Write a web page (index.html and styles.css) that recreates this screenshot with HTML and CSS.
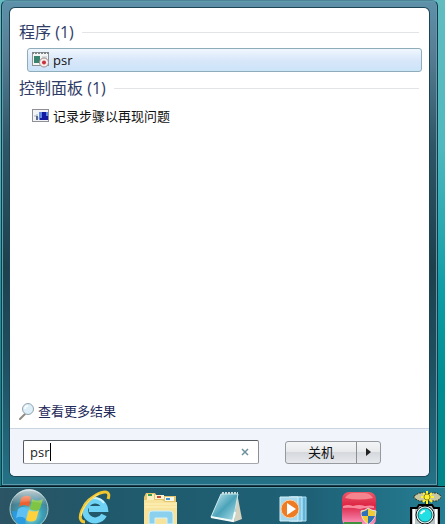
FILE: index.html
```html
<!DOCTYPE html>
<html lang="zh-CN">
<head>
    <meta charset="UTF-8">
    <meta name="viewport" content="width=device-width, initial-scale=1.0">
    <title>psr</title>
    <link rel="stylesheet" href="styles.css">
</head>
<body>
    <div class="desktop">
        <div class="startMenu">
            <div class="panel">
                <div class="results">
                    <h2>程序 (1)</h2>
                    <a href="#" class="item selected">
                        <svg width="18" height="16" viewBox="0 0 18 16">
                            <rect x="0.5" y="0.5" width="16" height="13" fill="#f4f6f6" stroke="#8b9293"/>
                            <path d="M0 1h17" stroke="#7d8588" stroke-width="2" stroke-dasharray="2 1"/>
                            <rect x="2" y="4" width="6" height="7" fill="#39836f"/>
                            <path d="M10 5h5M10 7h5" stroke="#b6bfc0"/>
                            <circle cx="12" cy="10.5" r="4.5" fill="#f7eeee" stroke="#9d8e90"/>
                            <circle cx="12" cy="10.5" r="2" fill="#c9303b"/>
                        </svg>
                        <span>psr</span>
                    </a>
                    <h2>控制面板 (1)</h2>
                    <a href="#" class="item">
                        <svg width="18" height="16" viewBox="0 0 18 16">
                            <rect x="0.5" y="1.5" width="16" height="12" fill="#f3f3f5" stroke="#8f8f98"/>
                            <rect x="7" y="4" width="9" height="8" fill="#5d86e0"/>
                            <path d="M10 4h4v4h2v4H8v-2h2z" fill="#1218a0"/>
                            <path d="M2 8h3M4 10h3M5 6v6" stroke="#a5b0c4"/>
                            <path d="M4 8h2v4H4z" fill="#5c6887"/>
                        </svg>
                        <span>记录步骤以再现问题</span>
                    </a>
                    <a href="#" class="more">
                        <svg width="18" height="18" viewBox="0 0 18 18">
                            <path d="M6 12L1 17" stroke="#8f8a82" stroke-width="2" stroke-linecap="round"/>
                            <circle cx="9" cy="7" r="5.5" fill="#dceff8" stroke="#93a5b0"/>
                            <path d="M6 7a3 3 0 0 1 3-3" fill="none" stroke="#fff" stroke-width="1.5"/>
                        </svg>
                        <span>查看更多结果</span>
                    </a>
                </div>
                <div class="footer">
                    <div class="search">
                        <input type="text" value="psr" aria-label="搜索程序和文件" id="query" autofocus>
                        <span class="caret"></span>
                        <button class="clear" aria-label="清除">
                            <svg width="8" height="8" viewBox="0 0 8 8"><path d="M1 1l6 6M7 1L1 7" stroke="#6d929b" stroke-width="1.5"/></svg>
                        </button>
                    </div>
                    <div class="power">
                        <button class="shutdown">关机</button>
                        <button class="arrow" aria-label="更多选项">
                            <svg width="5" height="8" viewBox="0 0 5 8"><path d="M0 0l5 4-5 4z" fill="#222"/></svg>
                        </button>
                    </div>
                </div>
            </div>
        </div>
    </div>
    <div class="taskbar">
        <button aria-label="开始">
            <svg width="40" height="36" viewBox="1 0 40 36">
                <defs>
                    <radialGradient id="orb" cx="55%" cy="65%" r="60%">
                        <stop offset="0" stop-color="#a5f0e0"/>
                        <stop offset="0.5" stop-color="#3a9fb8"/>
                        <stop offset="1" stop-color="#4a7482"/>
                    </radialGradient>
                    <linearGradient id="shine" x1="0" y1="0" x2="0" y2="1">
                        <stop offset="0" stop-color="#fff" stop-opacity="0.7"/>
                        <stop offset="1" stop-color="#fff" stop-opacity="0"/>
                    </linearGradient>
                </defs>
                <circle cx="21" cy="21" r="19" fill="url(#orb)" stroke="#a8cfd0"/>
                <path d="M4 23q7 0 14 4l-1 12Q5 35 4 23z" fill="#2a9be0"/>
                <path d="M13 10q5-4 10-1l-2 10q-5-4-10 0z" fill="#ee6130"/>
                <path d="M24 11q5 3 11 0l-3 10q-5 3-10 0z" fill="#7fc443"/>
                <path d="M10 21q5-4 10 0l-2 10q-5-4-10-1z" fill="#5fc0f4"/>
                <path d="M21 22q5 3 10 0l-3 10q-5 3-10 0z" fill="#ffd23d"/>
                <path d="M4 17a17 16 0 0 1 34 0q-17-7-34 0z" fill="url(#shine)"/>
            </svg>
        </button>
        <button aria-label="Internet Explorer">
            <svg width="34" height="36" viewBox="0 0 34 36">
                <path d="M26 27a10 10 0 1 1 1-6H11" fill="none" stroke="#6fd3f6" stroke-width="6"/>
                <path d="M10 12a11 10 0 0 1 16 3" fill="none" stroke="#c8f3ff" stroke-width="2"/>
                <path d="M7 34C-3 34 4 15 18 7 27 2 33 3 30 11" fill="none" stroke="#f2c62e" stroke-width="3"/>
                <path d="M3 28C4 20 12 10 21 6" fill="none" stroke="#ffe994"/>
            </svg>
        </button>
        <button aria-label="资源管理器">
            <svg width="36" height="36" viewBox="0 0 36 36">
                <path d="M1 9l2-4h9l2 3h19v28H1z" fill="#e5c66e"/>
                <path d="M4 6h7v6H4z" fill="#f8efc2"/>
                <path d="M5 6h4v2H5z" fill="#3b9d48"/>
                <path d="M12 7h9v4h-9z" fill="#fff4d4"/>
                <path d="M14 8h4v2h-4z" fill="#c44a35"/>
                <path d="M22 9h9v4h-9z" fill="#f5f8ec"/>
                <path d="M23 10h4v2h-4z" fill="#4a95c9"/>
                <path d="M1 12h18l3 2h12v22H1z" fill="#f7e39c"/>
                <path d="M2 16h32M2 19h32" stroke="#fff3bd"/>
                <path d="M6 36V26q0-3 3-3h18q3 0 3 3v10h-6v-6H12v6z" fill="#8bd1ee" stroke="#d1f2fb"/>
            </svg>
        </button>
        <button aria-label="记事本">
            <svg width="34" height="36" viewBox="0 0 34 36">
                <defs>
                    <linearGradient id="note" x1="0" y1="0" x2="1" y2="1">
                        <stop offset="0" stop-color="#d0eef2"/>
                        <stop offset="0.5" stop-color="#4ba3b9"/>
                        <stop offset="1" stop-color="#b9e7ee"/>
                    </linearGradient>
                </defs>
                <path d="M27 5l5 26-8 3z" fill="#d3d1c0"/>
                <path d="M11 6h17l-5 27L1 29z" fill="url(#note)" stroke="#c9eaee"/>
                <path d="M1 29l22 4 2-9" fill="none" stroke="#f3fbfa" stroke-width="2"/>
                <path d="M12 5h16" stroke="#c9dcdc" stroke-width="2" stroke-dasharray="2 1"/>
            </svg>
        </button>
        <button aria-label="媒体播放器">
            <svg width="28" height="36" viewBox="0 0 28 36">
                <path d="M12 9h15v24H12z" fill="#61b5dc" stroke="#b0def0"/>
                <path d="M10 9h13v24H10z" fill="#83c9e6" stroke="#d0effa"/>
                <path d="M1 9h18v24H1z" fill="#a6d9ed" stroke="#d4f0f8"/>
                <circle cx="11" cy="21" r="9" fill="#ee7c24" stroke="#fbd1a5"/>
                <path d="M8 15l9 6-9 6z" fill="#fff"/>
            </svg>
        </button>
        <button aria-label="安全工具">
            <svg width="36" height="36" viewBox="0 0 36 36">
                <defs>
                    <linearGradient id="sky" x1="0" y1="0" x2="0" y2="1">
                        <stop offset="0" stop-color="#ec5868"/>
                        <stop offset="0.4" stop-color="#dc2444"/>
                        <stop offset="1" stop-color="#ff9fcb"/>
                    </linearGradient>
                </defs>
                <rect x="1" y="4" width="34" height="34" rx="7" fill="url(#sky)"/>
                <path d="M4 10q3-5 9-5h10q6 0 9 5-14 3-28 0z" fill="#f4858f"/>
                <path d="M2 18q5-2 10 0 6-2 12 0 5-1 9 0v2q-8-1-14 1-9-2-17-1z" fill="#f88a9b"/>
                <path d="M3 34h18v2H3z" fill="#3f913f"/>
                <path d="M27 20q4 3 8 3 0 9-8 13-7-4-7-13 4 0 7-3z" fill="#f2cc36" stroke="#d9e4e8"/>
                <path d="M27 21v7h-6q-1-2 0-4 4-1 6-3zM27 28h7q-2 5-7 8z" fill="#2d72b8"/>
            </svg>
        </button>
        <button aria-label="截图">
            <svg width="32" height="36" viewBox="0 0 32 36">
                <path d="M18 12v9" stroke="#000" stroke-width="3"/>
                <path d="M5 8l5-3h6l3 1 3-1h6l4 3v2l-4 3h-6l-3-1-3 1h-6l-5-3z" fill="#c7c8a3" stroke="#302f1c" stroke-dasharray="2 1"/>
                <path d="M18 3v13M12 9h13M14 5l9 9M23 5l-9 9" stroke="#fff233" stroke-width="2"/>
                <circle cx="18" cy="9" r="3" fill="#fff233" stroke="#8f881d"/>
                <path d="M2 20h6l2-3h13l2 3h5v17H2z" fill="#b9c4c8" stroke="#000" stroke-width="2"/>
                <path d="M5 21v15M27 21v15" stroke="#fff" stroke-width="2"/>
                <circle cx="16" cy="27" r="9" fill="#e9f7f8" stroke="#111"/>
                <circle cx="16" cy="27" r="7" fill="#22dfe3" stroke="#13676d"/>
                <path d="M12 26q1-3 4-3" stroke="#fff" stroke-width="2" fill="none"/>
            </svg>
        </button>
    </div>
</body>
</html>
```
FILE: styles.css
```css
* {
    box-sizing: border-box;
}

body {
    margin: 0;
    height: 100vh;
    display: flex;
    flex-direction: column;
    overflow: hidden;
    font-family: "Open Sans", "Noto Sans CJK SC", sans-serif;
    font-size: 13px;
    line-height: 20px;
}

button {
    border: none;
    background: none;
    padding: 0;
    font: inherit;
    color: inherit;
    cursor: pointer;
}

a {
    color: inherit;
    text-decoration: none;
}

svg {
    display: block;
    flex: none;
}

.desktop {
    flex: 1;
    display: flex;
    min-height: 0;
    padding: 0 7px 0 1px;
    background: linear-gradient(#62bcc0 0%, #4fb9bf 30%, #0f9da6 60%, #008d91 80%, #008589 100%);
}

.startMenu {
    flex: 1;
    display: flex;
    padding: 7px 8px 9px;
    border: 1px solid #17394a;
    border-top-color: #4d8297;
    border-radius: 6px 6px 0 0;
    background: linear-gradient(#5e91aa 0%, #587f96 10%, #2d5565 30%, #1d404c 55%, #1d5061 75%, #247287 100%);
    box-shadow: inset 0 0 0 1px #5f9cab;
}

.panel {
    flex: 1;
    display: flex;
    flex-direction: column;
    border-radius: 5px;
    overflow: hidden;
    background: #fff;
    box-shadow: 0 0 0 1px #1d4555;
}

.results {
    flex: 1;
    display: flex;
    flex-direction: column;
    padding: 12px 7px 7px 9px;
}

h2 {
    display: flex;
    align-items: center;
    gap: 8px;
    margin: 0;
    padding-right: 3px;
    font-size: 16px;
    font-weight: 400;
    line-height: 24px;
    color: #303c68;
}

h2::after {
    content: "";
    flex: 1;
    height: 1px;
    background: #e2e4e8;
}

.item {
    display: flex;
    align-items: center;
    gap: 3px;
    height: 24px;
    margin: 4px 0 4px 8px;
    padding: 0 4px;
    border: 1px solid transparent;
    border-radius: 3px;
    color: #111;
}

.selected {
    border-color: #8eacb9;
    background: linear-gradient(#f0f7fe, #d9e7fa 50%, #cce4f8);
}

.more {
    display: flex;
    align-items: center;
    gap: 1px;
    margin-top: auto;
    color: #1c2858;
}

.footer {
    display: flex;
    align-items: center;
    gap: 26px;
    padding: 11px 48px 12px 13px;
    border-top: 1px solid #ccd6e2;
    background: #f1f4fb;
}

.search {
    position: relative;
    flex: 1;
    display: flex;
    align-items: center;
    height: 24px;
    border: 1px solid #a3a8ae;
    border-color: #555a5e #8c9093 #a4a8ac #555a5e;
    border-radius: 2px;
    background: #fff;
}

.search input {
    flex: 1;
    min-width: 0;
    height: 20px;
    padding: 0 6px;
    border: none;
    outline: none;
    background: none;
    font: inherit;
    color: #222;
    caret-color: transparent;
}

.caret {
    position: absolute;
    left: 26px;
    top: 2px;
    width: 1px;
    height: 18px;
    background: #000;
}

.clear {
    padding: 0 9px;
}

.power {
    display: flex;
    width: 96px;
    height: 23px;
    border: 1px solid #969a9e;
    border-radius: 3px;
    background: linear-gradient(#f4f5f7 0%, #e8eaec 45%, #d5d8dc 50%, #e6e8ec 100%);
    color: #111;
}

.shutdown {
    flex: 1;
}

.arrow {
    display: flex;
    align-items: center;
    justify-content: center;
    width: 24px;
    border-left: 1px solid #8c9093;
}

.taskbar {
    display: flex;
    justify-content: space-between;
    padding-left: 9px;
    height: 38px;
    border-top: 1px solid #061b25;
    box-shadow: inset 0 1px #579dab;
    background: linear-gradient(90deg, #2b5464 0%, #20596b 25%, #1e6177 70%, #257e93 100%);
}

.taskbar button {
    display: flex;
    justify-content: center;
    width: 40px;
    padding-top: 1px;
}
```
